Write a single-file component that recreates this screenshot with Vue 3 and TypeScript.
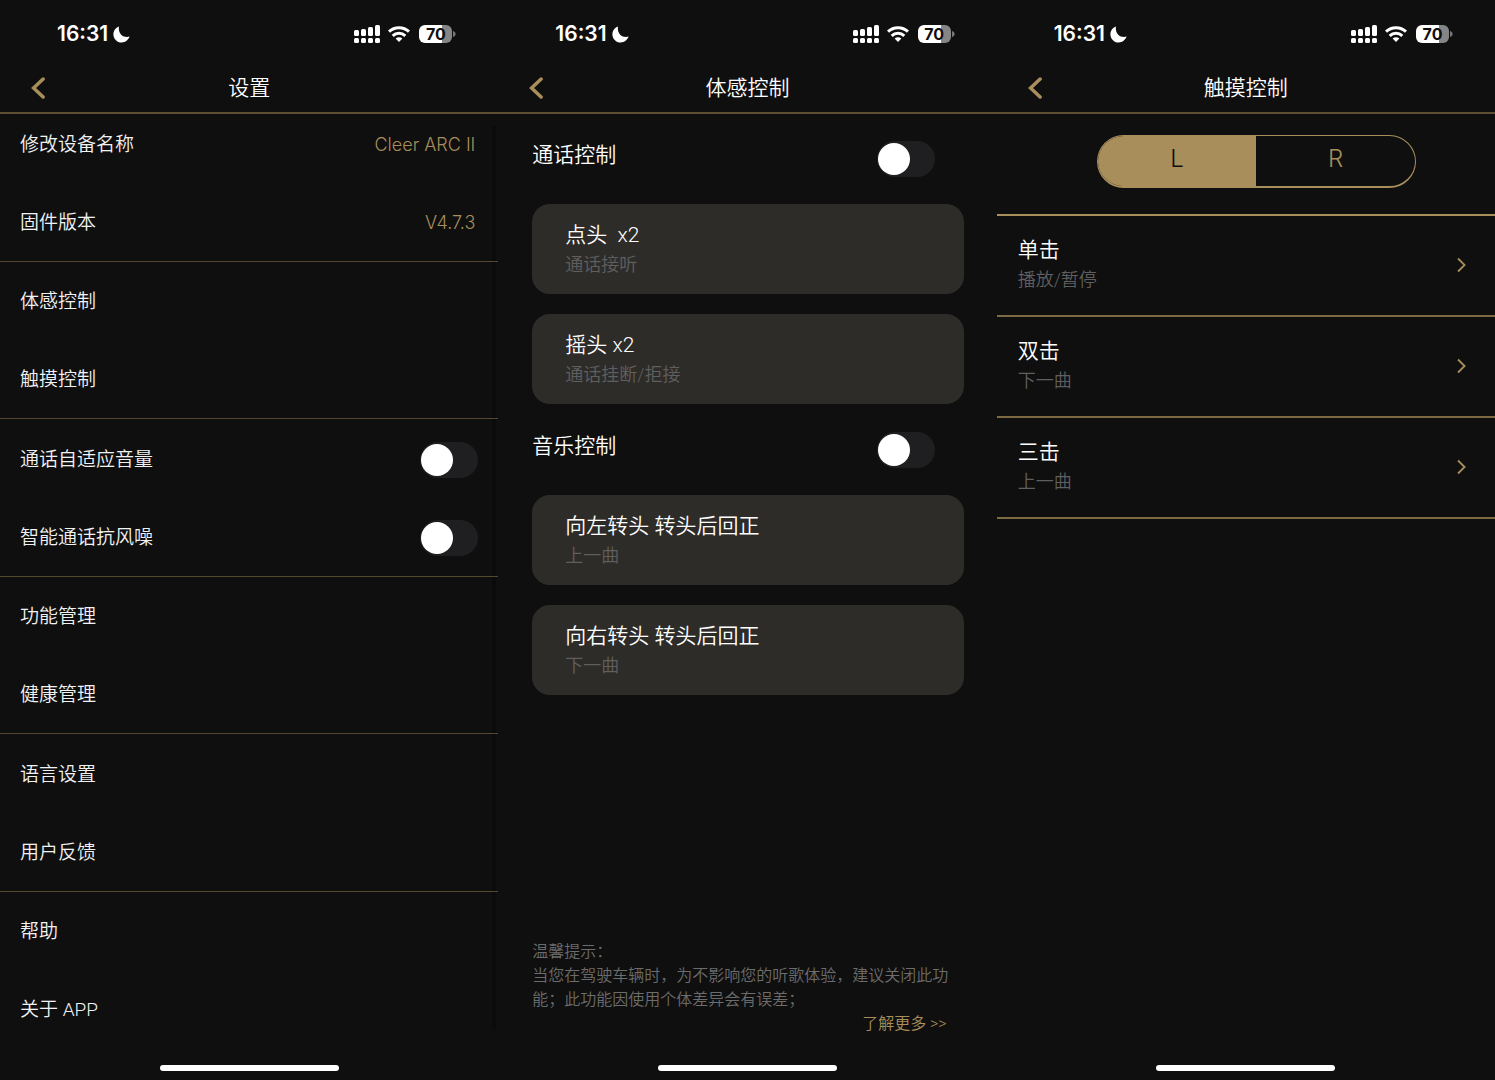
<script setup lang="ts">
import { ref } from 'vue'

type ScreenId = 'settings' | 'motion' | 'touch'

interface SettingItem {
  label: string
  value?: string
  toggle?: boolean
}

interface MotionGroup {
  title: string
  enabled: boolean
  cards: { gesture: string; action: string }[]
}

const screens: { id: ScreenId; title: string }[] = [
  { id: 'settings', title: '设置' },
  { id: 'motion', title: '体感控制' },
  { id: 'touch', title: '触摸控制' },
]

const settingGroups = ref<SettingItem[][]>([
  [
    { label: '修改设备名称', value: 'Cleer ARC II' },
    { label: '固件版本', value: 'V4.7.3' },
  ],
  [{ label: '体感控制' }, { label: '触摸控制' }],
  [
    { label: '通话自适应音量', toggle: false },
    { label: '智能通话抗风噪', toggle: false },
  ],
  [{ label: '功能管理' }, { label: '健康管理' }],
  [{ label: '语言设置' }, { label: '用户反馈' }],
  [{ label: '帮助' }, { label: '关于 APP' }],
])

const motionGroups = ref<MotionGroup[]>([
  {
    title: '通话控制',
    enabled: false,
    cards: [
      { gesture: '点头  x2', action: '通话接听' },
      { gesture: '摇头 x2', action: '通话挂断/拒接' },
    ],
  },
  {
    title: '音乐控制',
    enabled: false,
    cards: [
      { gesture: '向左转头 转头后回正', action: '上一曲' },
      { gesture: '向右转头 转头后回正', action: '下一曲' },
    ],
  },
])

const sides = ['L', 'R'] as const
const side = ref<'L' | 'R'>('L')

const touchActions = [
  { gesture: '单击', action: '播放/暂停' },
  { gesture: '双击', action: '下一曲' },
  { gesture: '三击', action: '上一曲' },
]
</script>

<template>
  <main class="board">
    <section v-for="screen in screens" :key="screen.id" class="screen">
      <div class="status">
        <span class="time">16:31</span>
        <svg class="moon" viewBox="0 0 17 17" aria-hidden="true">
          <path d="M5.900.5C2.700 1.600.4 4.600.4 8.200c0 4.600 3.700 8.300 8.300 8.300 3.700 0 6.800-2.500 7.900-5.900C12 12.200 4.900 9.400 5.900.5z" fill="#fff" />
        </svg>
        <span class="spacer"></span>
        <svg class="signal" viewBox="0 0 26 18" aria-hidden="true">
          <g fill="#fff">
            <rect x="0" y="5" width="5" height="6" rx="1.500" />
            <rect x="7" y="4" width="5" height="7" rx="1.500" />
            <rect x="14" y="2" width="5" height="9" rx="1.500" />
            <rect x="21" y="0" width="5" height="11" rx="1.500" />
            <rect x="0" y="13" width="5" height="5" rx="1.500" />
            <rect x="7" y="13" width="5" height="5" rx="1.500" />
            <rect x="14" y="13" width="5" height="5" rx="1.500" />
            <rect x="21" y="13" width="5" height="5" rx="1.500" />
          </g>
        </svg>
        <svg class="wifi" viewBox="0 0 22 16" aria-hidden="true">
          <g fill="none" stroke="#fff" stroke-width="3">
            <path d="M1 5.600C6.500.3 15.500.3 21 5.600" />
            <path d="M4.700 9.800c3.600-3.400 9-3.400 12.600 0" />
          </g>
          <path d="M7.600 12.600c2-1.700 4.800-1.700 6.800 0L11 16z" fill="#fff" />
        </svg>
        <span class="battery">70</span>
        <svg class="cap" viewBox="0 0 3 6" aria-hidden="true">
          <path d="M0 0c3.500 1 3.500 5 0 6z" fill="#77777a" />
        </svg>
      </div>

      <header class="nav">
        <button class="back" type="button" aria-label="返回">
          <svg viewBox="0 0 14 22" aria-hidden="true">
            <path d="M12.100 2 2.600 11l9.500 9" fill="none" stroke="#a88e5a" stroke-width="3.500" stroke-linecap="round" stroke-linejoin="miter" />
          </svg>
        </button>
        <h1>{{ screen.title }}</h1>
      </header>

      <div v-if="screen.id === 'settings'" class="settings">
        <div v-for="(group, g) in settingGroups" :key="g" class="group">
          <template v-for="item in group" :key="item.label">
            <label v-if="item.toggle !== undefined" class="setting">
              <span>{{ item.label }}</span>
              <input v-model="item.toggle" class="switch" type="checkbox" role="switch" />
            </label>
            <button v-else class="setting" type="button">
              <span>{{ item.label }}</span>
              <span v-if="item.value" class="value">{{ item.value }}</span>
            </button>
          </template>
        </div>
        <div class="scrollbar"></div>
      </div>

      <div v-else-if="screen.id === 'motion'" class="motion">
        <div v-for="group in motionGroups" :key="group.title" class="motion-group">
          <label class="motion-head">
            <span>{{ group.title }}</span>
            <input v-model="group.enabled" class="switch" type="checkbox" role="switch" />
          </label>
          <div class="cards">
            <button v-for="card in group.cards" :key="card.gesture" class="card" type="button">
              <span class="gesture">{{ card.gesture }}</span>
              <span class="action">{{ card.action }}</span>
            </button>
          </div>
        </div>
        <div class="tips">
          <p>温馨提示：</p>
          <p>当您在驾驶车辆时，为不影响您的听歌体验，建议关闭此功能；此功能因使用个体差异会有误差；</p>
          <a href="#more">了解更多 &gt;&gt;</a>
        </div>
      </div>

      <div v-else class="touch">
        <div class="segments" role="group" aria-label="左右耳">
          <button
            v-for="s in sides"
            :key="s"
            type="button"
            :class="{ active: side === s }"
            :aria-pressed="side === s"
            @click="side = s"
          >{{ s }}</button>
        </div>
        <div class="touch-list">
          <button v-for="row in touchActions" :key="row.gesture" class="touch-row" type="button">
            <span class="touch-text">
              <span class="gesture">{{ row.gesture }}</span>
              <span class="action">{{ row.action }}</span>
            </span>
            <svg class="chevron" viewBox="0 0 9 16" aria-hidden="true">
              <path d="M1 1.500 7.600 8 1 14.500" fill="none" stroke="#a88e5a" stroke-width="1.800" />
            </svg>
          </button>
        </div>
      </div>

      <div class="home"><span></span></div>
    </section>
  </main>
</template>

<style>
body {
  margin: 0;
  background: #0f0f0f;
}
</style>

<style scoped>
.board {
  display: grid;
  grid-template-columns: repeat(3, 1fr);
  min-height: 100vh;
  background: #0f0f0f;
  color: #f2f2f2;
  font-family: Roboto, "Noto Sans CJK SC", sans-serif;
  font-weight: 350;
}

.board * {
  box-sizing: border-box;
}

button {
  margin: 0;
  padding: 0;
  border: 0;
  background: none;
  color: inherit;
  font: inherit;
  text-align: left;
  cursor: pointer;
}

.screen {
  display: flex;
  flex-direction: column;
  min-width: 0;
}

/* Status bar */
.status {
  display: flex;
  align-items: center;
  height: 64px;
  padding: 4px 42px 0 57px;
  color: #fff;
  font-family: Inter, sans-serif;
}

.time {
  font-size: 21px;
  font-weight: 600;
  line-height: 24px;
}

.moon {
  width: 17px;
  height: 17px;
  margin-left: 5px;
}

.spacer {
  flex: 1;
}

.signal {
  width: 26px;
  height: 18px;
}

.wifi {
  width: 22px;
  height: 16px;
  margin: 0 9px 0 8px;
}

.battery {
  width: 33px;
  height: 18px;
  border-radius: 6px;
  background: linear-gradient(to right, #fff 70%, #858585 70%);
  color: #0f0f0f;
  font-size: 16px;
  font-weight: 700;
  line-height: 18px;
  text-align: center;
}

.cap {
  width: 3px;
  height: 6px;
  margin-left: 1px;
}

/* Title bar */
.nav {
  display: grid;
  grid-template-columns: 60px 1fr 60px;
  align-items: center;
  height: 50px;
  border-bottom: 2px solid #5e4f32;
}

.back {
  display: flex;
  padding-left: 31px;
}

.back svg {
  width: 14px;
  height: 22px;
}

h1 {
  margin: 0;
  color: #fff;
  font-size: 21px;
  font-weight: 350;
  line-height: 28px;
  text-align: center;
}

/* Switch */
.switch {
  flex: none;
  appearance: none;
  width: 58px;
  height: 36px;
  margin: 0;
  padding: 2px 1px;
  border-radius: 18px;
  background: #1f1f21;
  cursor: pointer;
}

.switch::before {
  content: "";
  display: block;
  width: 32px;
  height: 32px;
  border-radius: 50%;
  background: #fff;
}

.switch:checked {
  background: #a88e5a;
}

.switch:checked::before {
  margin-left: auto;
}

/* Settings */
.settings {
  position: relative;
  isolation: isolate;
  display: flex;
  flex: 1;
  flex-direction: column;
  margin-top: -10px;
}

.group {
  display: flex;
  flex: 1;
  flex-direction: column;
  border-bottom: 1px solid #54482e;
}

.group:nth-last-child(2) {
  border-bottom-color: transparent;
}

.setting {
  display: flex;
  flex: 1;
  align-items: center;
  justify-content: space-between;
  min-height: 60px;
  padding: 3px 20px 0;
  font-size: 19px;
  line-height: 28px;
}

.value {
  padding-right: 3px;
  color: #a88e5a;
  font-family: Inter, sans-serif;
  font-size: 18px;
  font-weight: 300;
}

.scrollbar {
  position: absolute;
  z-index: -1;
  top: 22px;
  right: 2px;
  bottom: 20px;
  width: 4px;
  background: #0b0b0b;
}

/* Motion control */
.motion {
  display: flex;
  flex: 1;
  flex-direction: column;
  padding: 0 33px 13px 34px;
}

.motion-group {
  padding-bottom: 1px;
}

.motion-head {
  display: flex;
  align-items: center;
  justify-content: space-between;
  height: 90px;
  padding-right: 29px;
  color: #fff;
  font-size: 21px;
}

.motion-head span {
  padding-bottom: 12px;
}

.cards {
  display: grid;
  gap: 20px;
}

.card {
  display: flex;
  flex-direction: column;
  gap: 2px;
  height: 90px;
  padding: 17px 33px;
  border-radius: 18px;
  background: #2e2c29;
}

.gesture {
  color: #fff;
  font-size: 21px;
  line-height: 28px;
  white-space: pre;
}

.action {
  color: #5f5f5f;
  font-size: 18px;
  line-height: 28px;
}

.tips {
  display: flex;
  flex-direction: column;
  margin-top: auto;
  padding-right: 10px;
  color: #6c6c6c;
  font-size: 16px;
  line-height: 24px;
}

.tips p {
  margin: 0;
}

.tips a {
  align-self: flex-end;
  padding-right: 7px;
  color: #a88e5a;
  text-decoration: none;
}

/* Touch control */
.touch {
  display: flex;
  flex: 1;
  flex-direction: column;
}

.segments {
  display: grid;
  grid-template-columns: 1fr 1fr;
  height: 53px;
  margin: 21px 79px 26px 100px;
  overflow: hidden;
  border: 1px solid #a88e5a;
  border-bottom-width: 2px;
  border-radius: 27px;
}

.segments button {
  padding-bottom: 5px;
  color: #a88e5a;
  font-family: Inter, sans-serif;
  font-size: 24px;
  font-weight: 300;
  text-align: center;
}

.segments .active {
  background: #a88e5a;
  color: #0f0f0f;
}

.touch-list {
  border-top: 2px solid #a88e5a;
}

.touch-row {
  display: flex;
  align-items: center;
  justify-content: space-between;
  width: 100%;
  height: 101px;
  padding: 0 29px 2px 21px;
  border-bottom: 2px solid #7d6942;
}

.touch-text {
  display: flex;
  flex-direction: column;
  gap: 2px;
}

.chevron {
  width: 9px;
  height: 16px;
}

/* Home indicator */
.home {
  display: flex;
  justify-content: center;
  height: 31px;
  padding-top: 16px;
}

.home span {
  width: 179px;
  height: 6px;
  border-radius: 3px;
  background: #fff;
}
</style>
